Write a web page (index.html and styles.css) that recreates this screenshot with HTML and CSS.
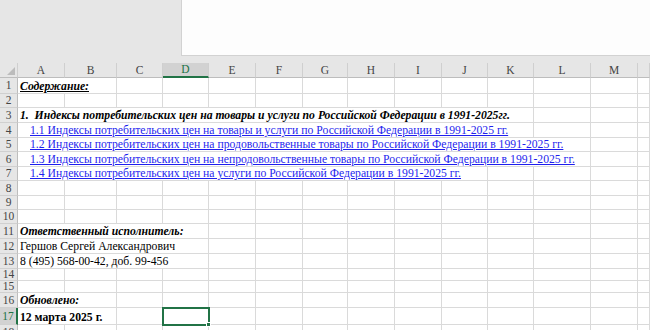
FILE: index.html
```html
<!DOCTYPE html>
<html lang="ru">
<head>
  <meta charset="UTF-8" />
  <title>Содержание</title>
  <link rel="stylesheet" href="styles.css">
</head>
<body>

  <!-- Area above the sheet -->
  <div class="top">
    <div class="panel"></div>
  </div>

  <!-- Sheet -->
  <div class="sheet">
    <div class="corner"></div>
    <div class="ch">A</div><div class="ch">B</div><div class="ch">C</div><div class="ch active">D</div><div class="ch">E</div><div class="ch">F</div><div class="ch">G</div><div class="ch">H</div><div class="ch">I</div><div class="ch">J</div><div class="ch">K</div><div class="ch">L</div><div class="ch">M</div><div class="ch"></div>

    <div class="rh">1</div>
    <div class="c s2 bi u">Содержание:</div><div class="c"></div><div class="c"></div><div class="c"></div><div class="c"></div><div class="c"></div><div class="c"></div><div class="c"></div><div class="c"></div><div class="c"></div><div class="c"></div><div class="c"></div><div class="c"></div>

    <div class="rh">2</div>
    <div class="c"></div><div class="c"></div><div class="c"></div><div class="c"></div><div class="c"></div><div class="c"></div><div class="c"></div><div class="c"></div><div class="c"></div><div class="c"></div><div class="c"></div><div class="c"></div><div class="c"></div><div class="c"></div>

    <div class="rh">3</div>
    <div class="c s11 bi">1.  Индексы потребительских цен на товары и услуги по Российской Федерации в 1991-2025гг.</div><div class="c"></div><div class="c"></div><div class="c"></div>

    <div class="rh">4</div>
    <div class="c s11 link"><a href="#">1.1 Индексы потребительских цен на товары и услуги по Российской Федерации в 1991-2025 гг.</a></div><div class="c"></div><div class="c"></div><div class="c"></div>

    <div class="rh">5</div>
    <div class="c s12 link"><a href="#">1.2 Индексы потребительских цен на продовольственные товары по Российской Федерации в 1991-2025 гг.</a></div><div class="c"></div><div class="c"></div>

    <div class="rh">6</div>
    <div class="c s12 link"><a href="#">1.3 Индексы потребительских цен на непродовольственные товары по Российской Федерации в 1991-2025 гг.</a></div><div class="c"></div><div class="c"></div>

    <div class="rh">7</div>
    <div class="c s10 link"><a href="#">1.4 Индексы потребительских цен на услуги по Российской Федерации в 1991-2025 гг.</a></div><div class="c"></div><div class="c"></div><div class="c"></div><div class="c"></div>

    <div class="rh">8</div>
    <div class="c"></div><div class="c"></div><div class="c"></div><div class="c"></div><div class="c"></div><div class="c"></div><div class="c"></div><div class="c"></div><div class="c"></div><div class="c"></div><div class="c"></div><div class="c"></div><div class="c"></div><div class="c"></div>

    <div class="rh">9</div>
    <div class="c"></div><div class="c"></div><div class="c"></div><div class="c"></div><div class="c"></div><div class="c"></div><div class="c"></div><div class="c"></div><div class="c"></div><div class="c"></div><div class="c"></div><div class="c"></div><div class="c"></div><div class="c"></div>

    <div class="rh">10</div>
    <div class="c"></div><div class="c"></div><div class="c"></div><div class="c"></div><div class="c"></div><div class="c"></div><div class="c"></div><div class="c"></div><div class="c"></div><div class="c"></div><div class="c"></div><div class="c"></div><div class="c"></div><div class="c"></div>

    <div class="rh">11</div>
    <div class="c s4 bi">Ответственный исполнитель:</div><div class="c"></div><div class="c"></div><div class="c"></div><div class="c"></div><div class="c"></div><div class="c"></div><div class="c"></div><div class="c"></div><div class="c"></div><div class="c"></div>

    <div class="rh">12</div>
    <div class="c s4">Гершов Сергей Александрович</div><div class="c"></div><div class="c"></div><div class="c"></div><div class="c"></div><div class="c"></div><div class="c"></div><div class="c"></div><div class="c"></div><div class="c"></div><div class="c"></div>

    <div class="rh">13</div>
    <div class="c s4">8 (495) 568-00-42, доб. 99-456</div><div class="c"></div><div class="c"></div><div class="c"></div><div class="c"></div><div class="c"></div><div class="c"></div><div class="c"></div><div class="c"></div><div class="c"></div><div class="c"></div>

    <div class="rh">14</div>
    <div class="c"></div><div class="c"></div><div class="c"></div><div class="c"></div><div class="c"></div><div class="c"></div><div class="c"></div><div class="c"></div><div class="c"></div><div class="c"></div><div class="c"></div><div class="c"></div><div class="c"></div><div class="c"></div>

    <div class="rh">15</div>
    <div class="c"></div><div class="c"></div><div class="c"></div><div class="c"></div><div class="c"></div><div class="c"></div><div class="c"></div><div class="c"></div><div class="c"></div><div class="c"></div><div class="c"></div><div class="c"></div><div class="c"></div><div class="c"></div>

    <div class="rh">16</div>
    <div class="c s2 bi">Обновлено:</div><div class="c"></div><div class="c"></div><div class="c"></div><div class="c"></div><div class="c"></div><div class="c"></div><div class="c"></div><div class="c"></div><div class="c"></div><div class="c"></div><div class="c"></div><div class="c"></div>

    <div class="rh active">17</div>
    <div class="c s2 b">12 марта 2025 г.</div><div class="c"></div><div class="c sel"></div><div class="c"></div><div class="c"></div><div class="c"></div><div class="c"></div><div class="c"></div><div class="c"></div><div class="c"></div><div class="c"></div><div class="c"></div><div class="c"></div>

    <div class="rh">18</div>
    <div class="c"></div><div class="c"></div><div class="c"></div><div class="c"></div><div class="c"></div><div class="c"></div><div class="c"></div><div class="c"></div><div class="c"></div><div class="c"></div><div class="c"></div><div class="c"></div><div class="c"></div><div class="c"></div>
  </div>

</body>
</html>
```

FILE: styles.css
```css
body {
  margin: 0;
  height: 330px;
  overflow: hidden;
  background: #e6e6e6;
  font-family: "Liberation Serif", "Times New Roman", serif;
}

/* Area above the sheet */
.top {
  height: 63px;
  padding-left: 181px;
  box-sizing: border-box;
}
.panel {
  height: 56px;
  background: #fdfdfd;
  border-left: 1px solid #d2d2d2;
  border-bottom: 1px solid #d2d2d2;
  box-sizing: border-box;
}

/* Sheet grid */
.sheet {
  display: grid;
  grid-template-columns: 18px 47px 52px 46px 46px 47px 47px 45px 47px 47px 46px 46px 57px 47px 12px;
  grid-template-rows: 15px 16px 14px 15px 15px 14px 15px 14px 15px 14px 14px 15px 15px 15px 12px 12px 15px 17px 15px;
  width: 650px;
  overflow: hidden;
  background: #fff;
  font-size: 11.7px;
}
.corner {
  position: relative;
  background: #e6e6e6;
  border-right: 1px solid #cfcfcf;
  border-bottom: 1px solid #bdbdbd;
}
.corner::after {
  content: "";
  position: absolute;
  right: 2px;
  bottom: 2px;
  border-left: 8px solid transparent;
  border-bottom: 8px solid #bcbcbc;
}
.ch {
  background: #e6e6e6;
  border-right: 1px solid #cfcfcf;
  border-bottom: 1px solid #bdbdbd;
  color: #444;
  font-size: 11.5px;
  line-height: 14px;
  text-align: center;
}
.ch.active {
  background: #d2d2d2;
  color: #217346;
  border-bottom: 2px solid #217346;
  line-height: 13px;
}
.rh {
  background: #e6e6e6;
  border-right: 1px solid #bdbdbd;
  border-bottom: 1px solid #d0d0d0;
  color: #444;
  font-size: 11.5px;
  line-height: 11px;
  display: flex;
  align-items: center;
  justify-content: center;
  overflow: hidden;
}
.rh.active {
  background: #d2d2d2;
  color: #217346;
  border-right: 2px solid #217346;
}

/* Cells */
.c {
  border-right: 1px solid #dadada;
  border-bottom: 1px solid #dadada;
  display: flex;
  align-items: flex-end;
  padding-left: 2px;
  white-space: pre;
  line-height: 13px;
  color: #000;
  min-width: 0;
}
.s2 { grid-column: span 2; }
.s4 { grid-column: span 4; }
.s10 { grid-column: span 10; }
.s11 { grid-column: span 11; }
.s12 { grid-column: span 12; }

.b { font-weight: bold; }
.bi { font-weight: bold; font-style: italic; }
.u { text-decoration: underline; }
.link { padding-left: 12px; }
.link a {
  color: #1f1fee;
  text-decoration: underline;
}

/* Selected cell */
.sel {
  position: relative;
  z-index: 1;
  outline: 2px solid #217346;
  outline-offset: -1px;
}
.sel::after {
  content: "";
  position: absolute;
  right: -3px;
  bottom: -3px;
  width: 5px;
  height: 5px;
  background: #217346;
  border: 1px solid #fff;
  box-sizing: border-box;
}
```
